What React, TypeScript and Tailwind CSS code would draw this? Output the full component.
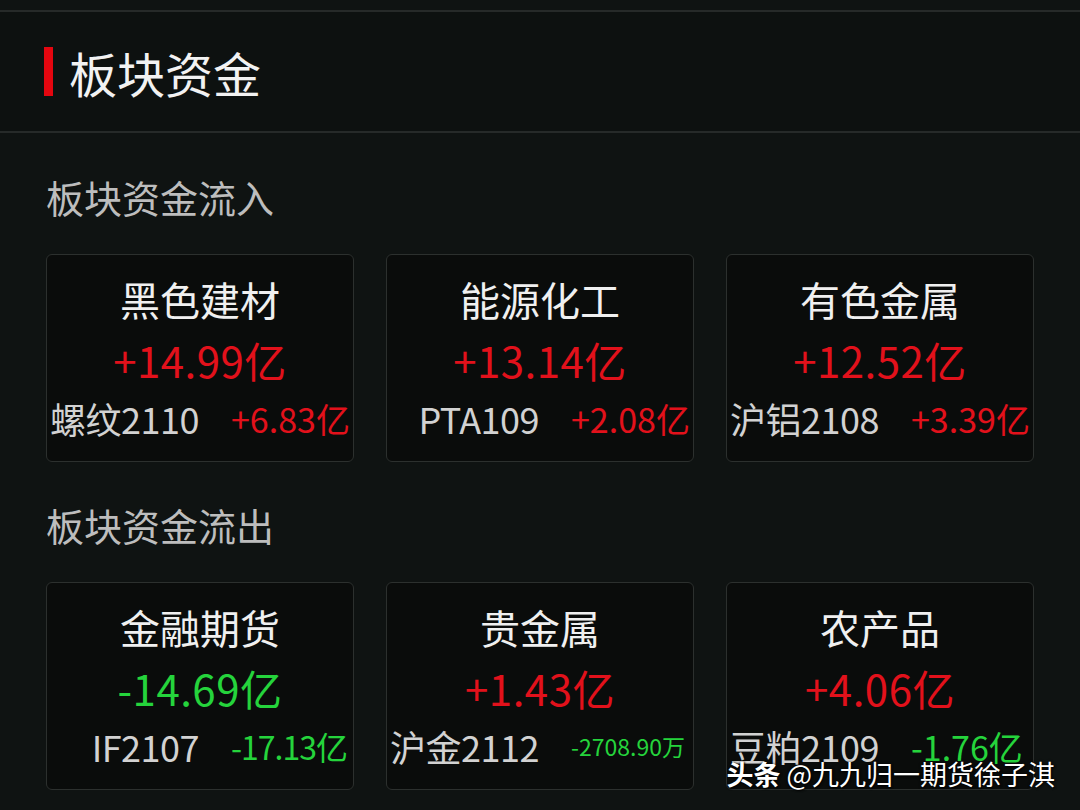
import React from 'react';

type Item = {
  name: string;
  total: string;
  up: boolean;
  contract: string;
  value: string;
  valueUp: boolean;
  small?: boolean;
  tight?: boolean;
};

const inflow: Item[] = [
  { name: '黑色建材', total: '+14.99亿', up: true, contract: '螺纹2110', value: '+6.83亿', valueUp: true },
  { name: '能源化工', total: '+13.14亿', up: true, contract: 'PTA109', value: '+2.08亿', valueUp: true },
  { name: '有色金属', total: '+12.52亿', up: true, contract: '沪铝2108', value: '+3.39亿', valueUp: true },
];

const outflow: Item[] = [
  { name: '金融期货', total: '-14.69亿', up: false, contract: 'IF2107', value: '-17.13亿', valueUp: false, tight: true },
  { name: '贵金属', total: '+1.43亿', up: true, contract: '沪金2112', value: '-2708.90万', valueUp: false, small: true },
  { name: '农产品', total: '+4.06亿', up: true, contract: '豆粕2109', value: '-1.76亿', valueUp: false },
];

const font = { fontFamily: '"Noto Sans CJK SC", "Noto Sans", sans-serif' };

// Single sector card
const Card: React.FC<{ item: Item }> = ({ item }) => {
  const size = item.small ? 'text-[23px]' : item.tight ? 'text-[32px] tracking-[-1px]' : 'text-[34px]';
  return (
    <div className="h-[208px] rounded-md border border-[#2c302e] bg-[#0a0c0b] flex flex-col items-center pt-[24px] overflow-hidden">
      <div className="text-[40px] leading-[40px] text-[#f0f0f0]">{item.name}</div>
      <div
        className={`mt-[19px] text-[42px] leading-[44px] tracking-[0.5px] ${item.up ? 'text-[#e2111b]' : 'text-[#25d43c]'}`}
      >
        {item.total}
      </div>
      <div className="mt-[16px] w-full flex items-center h-[40px] whitespace-nowrap">
        <div className="w-[152px] shrink-0 text-right text-[36px] leading-[40px] text-[#d2d2d2] tracking-[-0.5px]">
          {item.contract}
        </div>
        <div className={`pl-[32px] shrink-0 ${size} ${item.valueUp ? 'text-[#e2111b]' : 'text-[#25d43c]'}`}>
          {item.value}
        </div>
      </div>
    </div>
  );
};

const Section: React.FC<{ title: string; items: Item[]; mt: string }> = ({ title, items, mt }) => {
  return (
    <div className={`${mt} px-[46px]`}>
      <div className="text-[38px] leading-[44px] text-[#bdbdbd]">{title}</div>
      <div className="mt-[35px] grid grid-cols-3 gap-[32px]">
        {items.map((it) => (
          <Card key={it.name} item={it} />
        ))}
      </div>
    </div>
  );
};

export default function App() {
  return (
    <div className="relative w-[1080px] h-[810px] overflow-hidden bg-[#0f1312]" style={font}>
      {/* header */}
      <div className="mt-[10px] border-t-2 border-b-2 border-[#262a29] h-[123px] bg-[#0d1110] flex items-center pl-[44px]">
        <div className="w-[9px] h-[49px] bg-[#e4060f]" />
        <div className="ml-[16px] text-[48px] leading-[52px] text-[#f2f2f2]">板块资金</div>
      </div>

      <Section title="板块资金流入" items={inflow} mt="mt-[42px]" />
      <Section title="板块资金流出" items={outflow} mt="mt-[41px]" />

      {/* watermark */}
      <div
        className="absolute right-[25px] bottom-[20px] text-[27px] leading-[32px] text-white whitespace-nowrap"
        style={{ textShadow: '0 0 3px rgba(0,0,0,0.9), 1px 1px 2px rgba(0,0,0,0.9)' }}
      >
        <span className="font-bold">头条</span> @九九归一期货徐子淇
      </div>
    </div>
  );
}
